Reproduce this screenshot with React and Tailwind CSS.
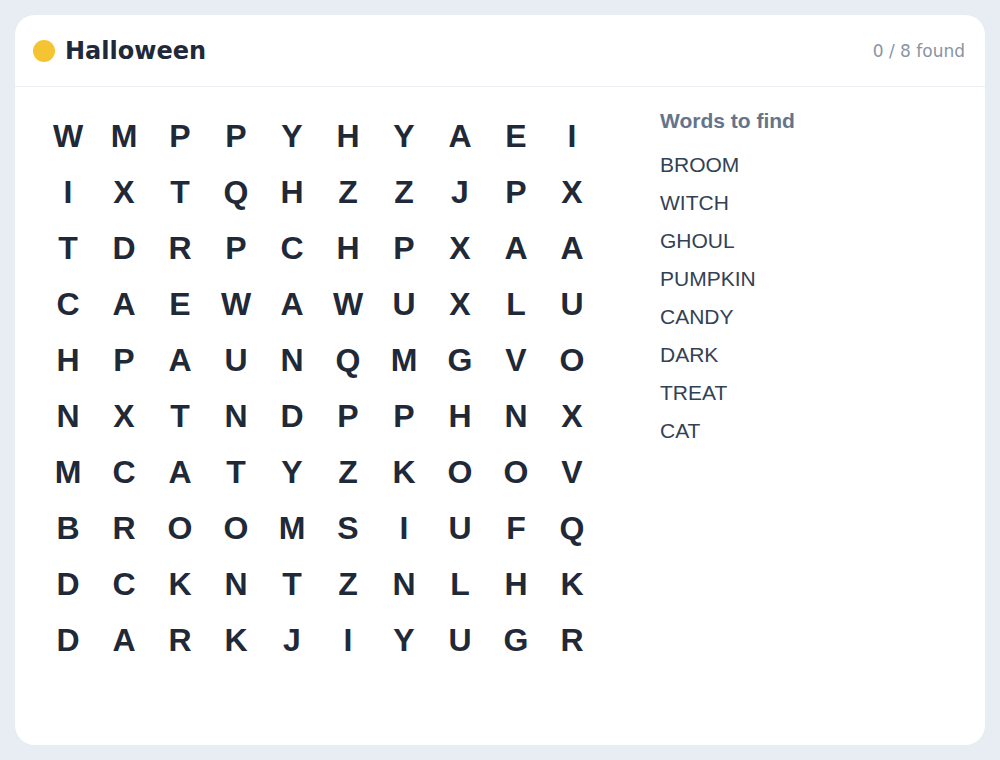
import React from 'react';

const grid = [
  'WMPPYHYAEI',
  'IXTQHZZJPX',
  'TDRPCHPXAA',
  'CAEWAWUXLU',
  'HPAUNQMGVO',
  'NXTNDPPHNX',
  'MCATYZKOOV',
  'BROOMSIUFQ',
  'DCKNTZNLHK',
  'DARKJIYUGR',
];

const words = ['BROOM', 'WITCH', 'GHOUL', 'PUMPKIN', 'CANDY', 'DARK', 'TREAT', 'CAT'];

export default function App() {
  return (
    <div className="w-[1000px] h-[760px] bg-[#e8edf4] p-[15px]">
      <div className="h-[730px] bg-white rounded-[20px] flex flex-col overflow-hidden">
        {/* Header */}
        <div className="h-[72px] flex items-center justify-between px-[18px] border-b border-[#eceff3] shrink-0">
          <div className="flex items-center gap-[10px]">
            <div className="w-[22px] h-[22px] rounded-full bg-[#f5c432]"></div>
            <h1 className="text-[24px] font-bold text-[#1e293b] font-['DejaVu_Sans',sans-serif] leading-none">Halloween</h1>
          </div>
          <span className="text-[17px] text-[#8a94a3] font-['DejaVu_Sans',sans-serif] pr-[2px] pt-[2px]">0 / 8 found</span>
        </div>

        {/* Body */}
        <div className="flex pt-[21px] pl-[25px] font-['Liberation_Sans',Arial,sans-serif]">
          <div className="grid grid-cols-10">
            {grid.map((row, r) =>
              row.split('').map((ch, c) => (
                <div
                  key={r + '-' + c}
                  className="w-[56px] h-[56px] flex items-center justify-center text-[32px] font-bold text-[#1f2937]"
                >
                  {ch}
                </div>
              ))
            )}
          </div>

          <div className="ml-[60px] pt-[1px]">
            <h2 className="text-[21px] font-bold text-[#64748b] h-[24px] leading-[24px]">Words to find</h2>
            <ul className="mt-[13px] flex flex-col">
              {words.map((w) => (
                <li key={w} className="text-[21px] text-[#334155] h-[38px] leading-[38px]">
                  {w}
                </li>
              ))}
            </ul>
          </div>
        </div>
      </div>
    </div>
  );
}
